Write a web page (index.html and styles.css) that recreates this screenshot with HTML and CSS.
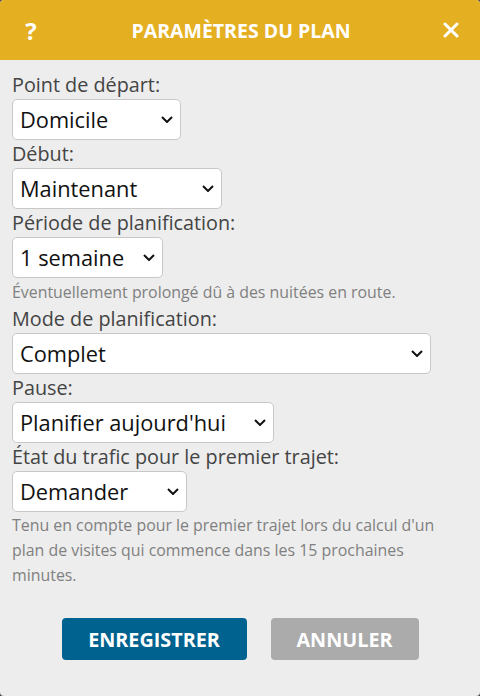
FILE: index.html
```html
<!DOCTYPE html>
<html lang="fr">
<head>
<meta charset="utf-8">
<link rel="stylesheet" href="styles.css">
</head>
<body>
<div class="dialog">
  <header class="head">
    <span class="head-btn">?</span>
    <h1 class="title">PARAMÈTRES DU PLAN</h1>
    <span class="head-btn close">
      <svg width="16" height="16" viewBox="0 0 16 16"><path d="M2 2L14 14M14 2L2 14" stroke="#fff" stroke-width="3" stroke-linecap="round"/></svg>
    </span>
  </header>
  <main class="content">
    <label class="label">Point de départ:</label>
    <div class="select w1"><span>Domicile</span><svg class="chev" width="12" height="7" viewBox="0 0 12 7"><path d="M1 1L6 6L11 1" fill="none" stroke="#111" stroke-width="2"/></svg></div>
    <label class="label">Début:</label>
    <div class="select w2"><span>Maintenant</span><svg class="chev" width="12" height="7" viewBox="0 0 12 7"><path d="M1 1L6 6L11 1" fill="none" stroke="#111" stroke-width="2"/></svg></div>
    <label class="label">Période de planification:</label>
    <div class="select w3"><span>1 semaine</span><svg class="chev" width="12" height="7" viewBox="0 0 12 7"><path d="M1 1L6 6L11 1" fill="none" stroke="#111" stroke-width="2"/></svg></div>
    <p class="hint">Éventuellement prolongé dû à des nuitées en route.</p>
    <label class="label">Mode de planification:</label>
    <div class="select w4"><span>Complet</span><svg class="chev" width="12" height="7" viewBox="0 0 12 7"><path d="M1 1L6 6L11 1" fill="none" stroke="#111" stroke-width="2"/></svg></div>
    <label class="label">Pause:</label>
    <div class="select w5"><span>Planifier aujourd'hui</span><svg class="chev" width="12" height="7" viewBox="0 0 12 7"><path d="M1 1L6 6L11 1" fill="none" stroke="#111" stroke-width="2"/></svg></div>
    <label class="label">État du trafic pour le premier trajet:</label>
    <div class="select w6"><span>Demander</span><svg class="chev" width="12" height="7" viewBox="0 0 12 7"><path d="M1 1L6 6L11 1" fill="none" stroke="#111" stroke-width="2"/></svg></div>
    <p class="hint long">Tenu en compte pour le premier trajet lors du calcul d'un plan de visites qui commence dans les 15 prochaines minutes.</p>
    <div class="actions">
      <button class="btn save">ENREGISTRER</button>
      <button class="btn cancel">ANNULER</button>
    </div>
  </main>
</div>
</body>
</html>
```

FILE: styles.css
```css
html {
  background: #4a4a4a;
}
body {
  margin: 0;
  font-family: "Open Sans", "Noto Sans", sans-serif;
}
.dialog {
  width: 480px;
  height: 696px;
  background: #ededed;
  border-radius: 4px;
  overflow: hidden;
}
.head {
  height: 60px;
  background: #e5af22;
  display: flex;
  align-items: center;
  justify-content: space-between;
  padding: 0 20px 0 22px;
  box-sizing: border-box;
  color: #fff;
}
.head-btn {
  width: 18px;
  font-size: 24px;
  font-weight: 700;
  display: flex;
  justify-content: center;
}
.title {
  margin: 0;
  font-size: 19.5px;
  font-weight: 700;
}
.content {
  padding: 11px 12px 0;
  display: flex;
  flex-direction: column;
  align-items: flex-start;
}
.label {
  font-size: 19.8px;
  line-height: 28px;
  color: #444;
}
.select {
  box-sizing: border-box;
  height: 41px;
  background: #fff;
  border: 1px solid #c8c8c8;
  border-radius: 5px;
  display: flex;
  align-items: center;
  justify-content: space-between;
  padding: 0 7px;
  font-size: 21.8px;
  color: #111;
}
.chev {
  flex: none;
}
.w1 { width: 169px; }
.w2 { width: 210px; }
.w3 { width: 151px; }
.w4 { width: 419px; }
.w5 { width: 262px; }
.w6 { width: 175px; }
.hint {
  margin: 0;
  font-size: 15.9px;
  line-height: 26px;
  color: #808080;
  padding-top: 1px;
  height: 26px;
}
.hint.long {
  height: auto;
  line-height: 25px;
}
.actions {
  align-self: stretch;
  display: flex;
  justify-content: center;
  gap: 24px;
  margin-top: 30px;
}
.btn {
  height: 42px;
  border: none;
  border-radius: 4px;
  color: #fff;
  font-family: "Open Sans", sans-serif;
  font-size: 19.8px;
  font-weight: 700;
  padding: 0;
}
.save {
  width: 185px;
  background: #00628f;
}
.cancel {
  width: 148px;
  background: #ababab;
}
```
